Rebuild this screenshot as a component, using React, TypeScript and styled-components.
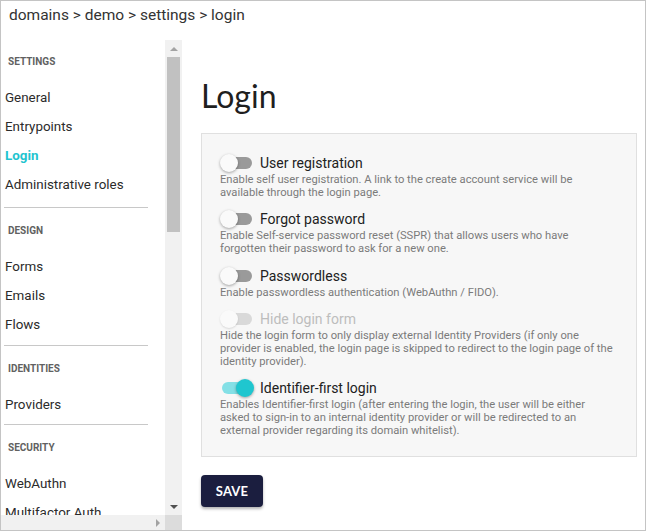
import React from "react";
import styled, { createGlobalStyle } from "styled-components";

const Global = createGlobalStyle`
  html, body { margin: 0; padding: 0; background: #fff; }
  body { font-family: Roboto, "Liberation Sans", sans-serif; color: #222; }
  * { box-sizing: border-box; }
`;

const Frame = styled.div`
  width: 646px;
  height: 531px;
  border: 1px solid #c4c4c4;
  display: flex;
  flex-direction: column;
  overflow: hidden;
`;

const Breadcrumb = styled.div`
  height: 39px;
  flex: none;
  padding: 4px 8px 0;
  font-size: 15.5px;
  line-height: 20px;
  color: #333;
`;

const Body = styled.div`
  flex: 1;
  min-height: 0;
  display: flex;
`;

const Sidebar = styled.nav`
  width: 181px;
  flex: none;
  display: flex;
  flex-direction: column;
`;

const SideTop = styled.div`
  flex: 1;
  min-height: 0;
  display: flex;
`;

const Viewport = styled.div`
  flex: 1;
  min-width: 0;
  overflow: hidden;
`;

const VScroll = styled.div`
  width: 17px;
  flex: none;
  background: #f1f1f1;
  display: flex;
  flex-direction: column;
`;

const ScrollBtn = styled.div<{ $w?: number; $h?: number }>`
  flex: none;
  width: ${(p) => p.$w ?? 17}px;
  height: ${(p) => p.$h ?? 17}px;
  display: flex;
  align-items: center;
  justify-content: center;
`;

const VTrack = styled.div`
  flex: 1;
  min-height: 0;
`;

const VThumb = styled.div`
  height: 175px;
  margin: 0 2px;
  background: #c1c1c1;
`;

const SideBottom = styled.div`
  height: 15px;
  flex: none;
  display: flex;
`;

const HScroll = styled.div`
  flex: 1;
  background: #f1f1f1;
  display: flex;
  justify-content: flex-end;
`;

const Corner = styled.div`
  width: 17px;
  flex: none;
  background: #dcdcdc;
`;

const Section = styled.div<{ $first?: boolean }>`
  padding-top: ${(p) => (p.$first ? 15 : 16)}px;
`;

const SectionTitle = styled.div`
  padding-left: 7px;
  font-size: 10px;
  line-height: 14px;
  font-weight: 700;
  color: #616161;
  text-transform: uppercase;
  margin-bottom: 14px;
`;

const NavItem = styled.a<{ $active?: boolean }>`
  display: block;
  padding-left: 4px;
  height: 29px;
  line-height: 29px;
  font-size: 13.4px;
  white-space: nowrap;
  color: ${(p) => (p.$active ? "#1fc4cf" : "#2b2b2b")};
  font-weight: ${(p) => (p.$active ? 700 : 400)};
  text-decoration: none;
  cursor: pointer;
`;

const Divider = styled.hr<{ $first?: boolean }>`
  margin: ${(p) => (p.$first ? 8 : 5.5)}px 17px 0 3px;
  border: none;
  border-top: 1px solid #c8c8c8;
  height: 0;
`;

const Main = styled.main`
  flex: 1;
  min-width: 0;
  padding: 36px 8px 0 19px;
`;

const Title = styled.h1`
  margin: 0 0 17px;
  font-family: Lato, Roboto, sans-serif;
  font-weight: 400;
  font-size: 32px;
  line-height: 40px;
  color: #1f1f1f;
`;

const Panel = styled.section`
  background: #f7f7f7;
  border: 1px solid #e0e0e0;
  padding: 19px 18px 19px;
  display: flex;
  flex-direction: column;
  gap: 10.3px;
`;

const Option = styled.div``;

const OptionRow = styled.label<{ $disabled?: boolean }>`
  display: flex;
  align-items: center;
  height: 20px;
  gap: 6px;
  font-size: 14px;
  color: ${(p) => (p.$disabled ? "#bdbdbd" : "#212121")};
  cursor: ${(p) => (p.$disabled ? "default" : "pointer")};
`;

const Switch = styled.span`
  position: relative;
  width: 34px;
  height: 18px;
  flex: none;
`;

const Track = styled.span<{ $on: boolean; $disabled?: boolean }>`
  position: absolute;
  left: 2px;
  top: 3px;
  width: 30px;
  height: 12px;
  border-radius: 6px;
  background: ${(p) => (p.$on ? "#84e0e6" : p.$disabled ? "#d9d9d9" : "#9a9a9a")};
`;

const Thumb = styled.span<{ $on: boolean; $disabled?: boolean }>`
  position: absolute;
  top: 0;
  left: ${(p) => (p.$on ? 16 : 0)}px;
  width: 18px;
  height: 18px;
  border-radius: 50%;
  background: ${(p) => (p.$on ? "#1fc6cf" : "#fafafa")};
  box-shadow: ${(p) =>
    p.$disabled
      ? "0 1px 2px rgba(0,0,0,0.12)"
      : "0 1px 3px rgba(0,0,0,0.35)"};
`;

const Desc = styled.div`
  font-size: 11.2px;
  line-height: 13px;
  color: #7b7b7b;
  white-space: nowrap;
`;

const SaveButton = styled.button`
  margin-top: 18px;
  width: 62px;
  height: 32px;
  border: none;
  border-radius: 4px;
  background: #1b1e3f;
  color: #fff;
  font-family: Lato, Roboto, sans-serif;
  font-weight: 700;
  font-size: 13px;
  letter-spacing: 0.2px;
  box-shadow: 0 2px 3px rgba(0, 0, 0, 0.3);
  cursor: pointer;
`;

const Arrow = ({ dir, color }: { dir: "up" | "down" | "right"; color: string }) => {
  const pts =
    dir === "up" ? "0,4 4,0 8,4" : dir === "down" ? "0,0 8,0 4,4" : "0,0 4,4 0,8";
  const w = dir === "right" ? 4 : 8;
  const h = dir === "right" ? 8 : 4;
  return (
    <svg width={w} height={h} viewBox={`0 0 ${w} ${h}`}>
      <polygon points={pts} fill={color} />
    </svg>
  );
};

type Nav = { title: string; items: string[] };

const nav: Nav[] = [
  { title: "Settings", items: ["General", "Entrypoints", "Login", "Administrative roles"] },
  { title: "Design", items: ["Forms", "Emails", "Flows"] },
  { title: "Identities", items: ["Providers"] },
  { title: "Security", items: ["WebAuthn", "Multifactor Auth", "Certificates", "Account linking"] },
  { title: "User management", items: ["Users", "Groups", "Roles", "Scim"] },
  { title: "OAuth 2.0", items: ["Scopes", "Client Registration", "Token Exchange", "Settings"] },
  { title: "OpenID", items: ["Client Registration", "CIBA", "Settings"] },
  { title: "Audit", items: ["Audit log", "Reporters"] },
];

type Opt = { label: string; lines: string[]; on: boolean; disabled?: boolean };

const options: Opt[] = [
  {
    label: "User registration",
    lines: [
      "Enable self user registration. A link to the create account service will be",
      "available through the login page.",
    ],
    on: false,
  },
  {
    label: "Forgot password",
    lines: [
      "Enable Self-service password reset (SSPR) that allows users who have",
      "forgotten their password to ask for a new one.",
    ],
    on: false,
  },
  {
    label: "Passwordless",
    lines: ["Enable passwordless authentication (WebAuthn / FIDO)."],
    on: false,
  },
  {
    label: "Hide login form",
    lines: [
      "Hide the login form to only display external Identity Providers (if only one",
      "provider is enabled, the login page is skipped to redirect to the login page of the",
      "identity provider).",
    ],
    on: false,
    disabled: true,
  },
  {
    label: "Identifier-first login",
    lines: [
      "Enables Identifier-first login (after entering the login, the user will be either",
      "asked to sign-in to an internal identity provider or will be redirected to an",
      "external provider regarding its domain whitelist).",
    ],
    on: true,
  },
];

export default function App() {
  return (
    <>
      <Global />
      <Frame>
        <Breadcrumb>domains &gt; demo &gt; settings &gt; login</Breadcrumb>
        <Body>
          <Sidebar>
            <SideTop>
              <Viewport>
                {nav.map((s, i) => (
                  <Section key={s.title} $first={i === 0}>
                    <SectionTitle>{s.title}</SectionTitle>
                    {s.items.map((it) => (
                      <NavItem key={it} $active={s.title === "Settings" && it === "Login"}>
                        {it}
                      </NavItem>
                    ))}
                    <Divider $first={i === 0} />
                  </Section>
                ))}
              </Viewport>
              <VScroll>
                <ScrollBtn>
                  <Arrow dir="up" color="#a3a3a3" />
                </ScrollBtn>
                <VTrack>
                  <VThumb />
                </VTrack>
                <ScrollBtn>
                  <Arrow dir="down" color="#505050" />
                </ScrollBtn>
              </VScroll>
            </SideTop>
            <SideBottom>
              <HScroll>
                <ScrollBtn $w={15} $h={15}>
                  <Arrow dir="right" color="#a3a3a3" />
                </ScrollBtn>
              </HScroll>
              <Corner />
            </SideBottom>
          </Sidebar>
          <Main>
            <Title>Login</Title>
            <Panel>
              {options.map((o) => (
                <Option key={o.label}>
                  <OptionRow $disabled={o.disabled}>
                    <Switch role="switch" aria-checked={o.on}>
                      <Track $on={o.on} $disabled={o.disabled} />
                      <Thumb $on={o.on} $disabled={o.disabled} />
                    </Switch>
                    {o.label}
                  </OptionRow>
                  <Desc>
                    {o.lines.map((l, i) => (
                      <React.Fragment key={i}>
                        {i > 0 && <br />}
                        {l}
                      </React.Fragment>
                    ))}
                  </Desc>
                </Option>
              ))}
            </Panel>
            <SaveButton>SAVE</SaveButton>
          </Main>
        </Body>
      </Frame>
    </>
  );
}
